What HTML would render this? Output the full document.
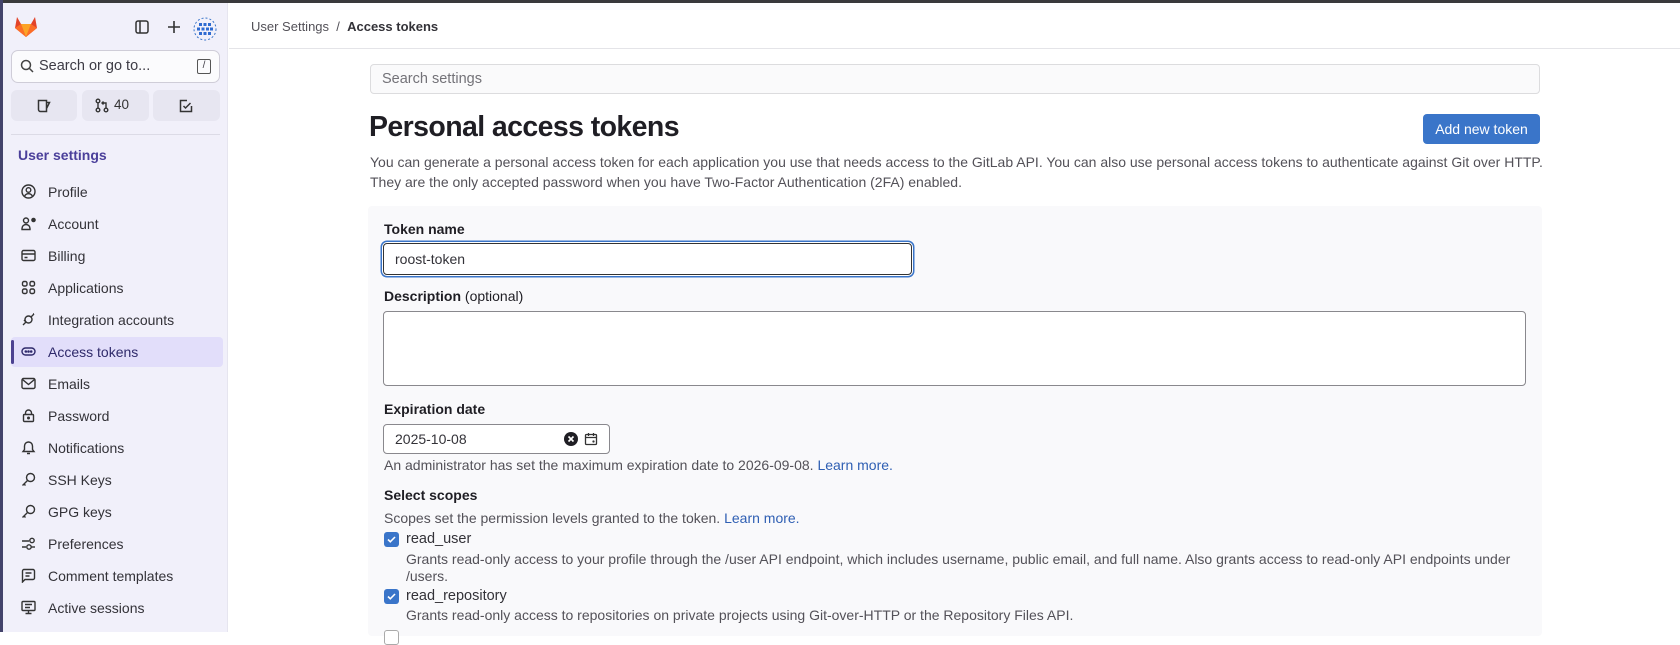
<!DOCTYPE html>
<html><head><meta charset="utf-8"><style>
*{box-sizing:border-box;margin:0;padding:0}
body{width:1680px;height:632px;overflow:hidden;font-family:"Liberation Sans",sans-serif;background:#fff;color:#333238;position:relative}
.topbar{position:absolute;left:0;top:0;width:1680px;height:3px;background:#3a3a3c}
.lstrip{position:absolute;left:0;top:0;width:3px;height:632px;background:#43436b}
.side{position:absolute;left:3px;top:3px;width:225px;height:629px;background:#f1f0fa;border-right:1px solid #e6e5ef}
.sbox{position:absolute;left:8px;top:47px;width:209px;height:33px;border:1px solid #cfcdd8;border-radius:7px;background:#fbfbfd;font-size:14.5px;color:#3d3b45;padding:7px 0 0 27px}
.kbd{position:absolute;right:8px;top:8px;width:14px;height:15px;border:1.3px solid #555;border-radius:2px;font-size:10px;text-align:center;line-height:12px}
.btn3{position:absolute;top:87px;height:31px;background:#e7e6f1;border-radius:6px}
.sep{position:absolute;left:8px;top:131px;width:209px;height:1px;background:#dcdbe6}
.sh{position:absolute;left:15px;top:144px;font-size:14px;font-weight:bold;color:#4a3f9a}
.item{position:absolute;left:8px;width:212px;height:30px;font-size:14px;color:#333238;padding:7px 0 0 37px}
.item svg{position:absolute;left:10px;top:7px}
.item.act{background:#e2defa;border-radius:4px;color:#2f2a6b}
.item.act:before{content:"";position:absolute;left:0;top:3px;width:3px;height:24px;background:#4c4191;border-radius:2px}
.hdr{position:absolute;left:229px;top:3px;right:0;height:46px;border-bottom:1px solid #e4e4e8;font-size:13px;padding:16px 0 0 22px;color:#535158}
.hdr b{color:#333238}
.search{position:absolute;left:370px;top:64px;width:1170px;height:30px;border:1px solid #dcdcde;border-radius:4px;background:#fafafb;font-size:14.5px;color:#737278;padding:6px 11px}
h1{position:absolute;left:369px;top:111px;font-size:28.5px;font-weight:bold;color:#1f1e24;letter-spacing:-0.6px}
.addbtn{position:absolute;left:1423px;top:114px;width:117px;height:30px;background:#3a75c9;border-radius:4px;color:#fff;font-size:14px;text-align:center;line-height:30px}
.desc{position:absolute;left:370px;top:152px;font-size:14px;line-height:20px;color:#535158}
.panel{position:absolute;left:368px;top:206px;width:1174px;height:430px;background:#f9f9fb;border-radius:4px}
.lbl{position:absolute;left:384px;font-size:14px;font-weight:bold;color:#1f1e24}
.lbl span{font-weight:normal}
.inp{position:absolute;background:#fff;border:1px solid #89888d;border-radius:4px;font-size:14px;color:#333238;padding:7px 11px}
.help{position:absolute;left:384px;font-size:14px;color:#535158}
a{color:#2f5fb3;text-decoration:none}
.cb{position:absolute;left:384px;width:15px;height:15px;background:#3a75c9;border-radius:3px}
.cb svg{position:absolute;left:2px;top:2px}
.sc{position:absolute;left:406px;font-size:14.5px;color:#333238}
.sd{position:absolute;left:406px;font-size:14px;color:#535158;line-height:16.5px}
</style></head><body>
<div class="topbar"></div>
<div class="side">
<svg style="position:absolute;left:11px;top:12px" width="24" height="23" viewBox="0 0 24 23"><path d="M12 22 L1 13 L3 2 L7 9 H17 L21 2 L23 13 Z" fill="#e24329"/><path d="M12 22 L1 13 L7 9 Z" fill="#fc6d26"/><path d="M12 22 L23 13 L17 9 Z" fill="#fc6d26"/><path d="M12 22 L7 9 H17 Z" fill="#fca326"/></svg>
<svg style="position:absolute;left:132px;top:17px" width="14" height="14" viewBox="0 0 14 14" fill="none" stroke="#333" stroke-width="1.5"><rect x="1" y="1" width="12" height="12" rx="2"/><path d="M5 1v12"/></svg>
<svg style="position:absolute;left:164px;top:17px" width="14" height="14" viewBox="0 0 14 14" stroke="#333" stroke-width="1.6"><path d="M7 1v12M1 7h12"/></svg>
<svg style="position:absolute;left:190px;top:14px" width="24" height="24" viewBox="0 0 24 24"><circle cx="12" cy="12" r="11" fill="none" stroke="#3a75c9" stroke-width="1" stroke-dasharray="2 2"/><g fill="#2f6bd1"><rect x="6" y="6" width="3" height="3"/><rect x="10.5" y="6" width="3" height="3"/><rect x="15" y="6" width="3" height="3"/><rect x="4" y="10.5" width="3" height="3"/><rect x="8.5" y="10.5" width="3" height="3"/><rect x="13" y="10.5" width="3" height="3"/><rect x="17" y="10.5" width="3" height="3"/><rect x="6" y="15" width="3" height="3"/><rect x="10.5" y="15" width="3" height="3"/><rect x="15" y="15" width="3" height="3"/></g></svg>
<div class="sbox"><svg style="position:absolute;left:8px;top:8px" width="14" height="14" viewBox="0 0 14 14" fill="none" stroke="#444" stroke-width="1.5"><circle cx="6" cy="6" r="4.5"/><path d="M9.5 9.5L13 13"/></svg>Search or go to...<span class="kbd">/</span></div>
<div class="btn3" style="left:8px;width:66px"><svg style="position:absolute;left:26px;top:9px" width="15" height="14" viewBox="0 0 15 14" fill="none" stroke="#333" stroke-width="1.5"><path d="M1.5 1.5h8v11h-6a2 2 0 0 1-2-2z M9.5 3.5h3l-3 6"/></svg></div>
<div class="btn3" style="left:79px;width:67px"><svg style="position:absolute;left:13px;top:8px" width="14" height="15" viewBox="0 0 14 15" fill="none" stroke="#333" stroke-width="1.4"><circle cx="3" cy="3" r="1.8"/><circle cx="3" cy="12" r="1.8"/><circle cx="11" cy="12" r="1.8"/><path d="M3 5v5M11 10V5H7M8.5 3.5L7 5l1.5 1.5"/></svg><span style="position:absolute;left:32px;top:7px;font-size:13.5px;color:#333">40</span></div>
<div class="btn3" style="left:150px;width:67px"><svg style="position:absolute;left:26px;top:9px" width="14" height="14" viewBox="0 0 14 14" fill="none" stroke="#333" stroke-width="1.5"><path d="M12.5 7v5.5h-11v-11H8M4.5 7l2 2 5-5"/></svg></div>
<div class="sep"></div>
<div class="sh">User settings</div>
</div>
<div class="lstrip"></div>
<div style="position:absolute;left:3px;top:3px">
<div class="item" style="top:174px"><svg width="15" height="15" viewBox="0 0 15 15" fill="none" stroke="#333" stroke-width="1.4"><circle cx="7.5" cy="7.5" r="6.5"/><circle cx="7.5" cy="6" r="2.3"/><path d="M3.5 12.3c1-2 2.3-2.6 4-2.6s3 .6 4 2.6"/></svg>Profile</div>
<div class="item" style="top:206px"><svg width="16" height="15" viewBox="0 0 16 15" fill="none" stroke="#333" stroke-width="1.4"><circle cx="5" cy="4.5" r="2.5"/><path d="M1 13.5v-1a4 4 0 0 1 8 0v1z"/><circle cx="12.5" cy="4" r="1.6" fill="#333"/></svg>Account</div>
<div class="item" style="top:238px"><svg width="15" height="15" viewBox="0 0 15 15" fill="none" stroke="#333" stroke-width="1.4"><rect x="1" y="2.5" width="13" height="10" rx="1.5"/><path d="M1 6h13M3.5 9.5h3"/></svg>Billing</div>
<div class="item" style="top:270px"><svg width="15" height="15" viewBox="0 0 15 15" fill="none" stroke="#333" stroke-width="1.4"><rect x="1.5" y="1.5" width="4.5" height="4.5" rx="1.5"/><rect x="9" y="1.5" width="4.5" height="4.5" rx="1.5"/><rect x="1.5" y="9" width="4.5" height="4.5" rx="1.5"/><rect x="9" y="9" width="4.5" height="4.5" rx="1.5"/></svg>Applications</div>
<div class="item" style="top:302px"><svg width="15" height="15" viewBox="0 0 15 15" fill="none" stroke="#333" stroke-width="1.4"><circle cx="7.5" cy="7.5" r="3.5" transform="rotate(-45 7.5 7.5)"/><path d="M2 13l3-3M10 5l3-3M13 2h-1M5 10L3 8"/></svg>Integration accounts</div>
<div class="item act" style="top:334px"><svg width="15" height="15" viewBox="0 0 15 15" fill="none" stroke="#2f2a6b" stroke-width="1.4"><rect x="1" y="4" width="13" height="7" rx="3.5"/><circle cx="4.8" cy="7.5" r=".6" fill="#2f2a6b"/><circle cx="7.5" cy="7.5" r=".6" fill="#2f2a6b"/><circle cx="10.2" cy="7.5" r=".6" fill="#2f2a6b"/></svg>Access tokens</div>
<div class="item" style="top:366px"><svg width="15" height="15" viewBox="0 0 15 15" fill="none" stroke="#333" stroke-width="1.4"><rect x="1" y="2.5" width="13" height="10" rx="1.5"/><path d="M1.5 3.5l6 5 6-5"/></svg>Emails</div>
<div class="item" style="top:398px"><svg width="15" height="15" viewBox="0 0 15 15" fill="none" stroke="#333" stroke-width="1.4"><rect x="2.5" y="6.5" width="10" height="7" rx="1"/><path d="M4.5 6.5V5a3 3 0 0 1 6 0v1.5"/><circle cx="7.5" cy="10" r=".8" fill="#333"/></svg>Password</div>
<div class="item" style="top:430px"><svg width="15" height="15" viewBox="0 0 15 15" fill="none" stroke="#333" stroke-width="1.4"><path d="M2 11.5h11l-1.5-2V6a4 4 0 0 0-8 0v3.5z M6 13.5h3"/></svg>Notifications</div>
<div class="item" style="top:462px"><svg width="15" height="15" viewBox="0 0 15 15" fill="none" stroke="#333" stroke-width="1.4"><circle cx="9.5" cy="5.5" r="4"/><path d="M6.5 8.5l-5 5M3 12l1.5 1.5"/></svg>SSH Keys</div>
<div class="item" style="top:494px"><svg width="15" height="15" viewBox="0 0 15 15" fill="none" stroke="#333" stroke-width="1.4"><circle cx="9.5" cy="5.5" r="4"/><path d="M6.5 8.5l-5 5M3 12l1.5 1.5"/></svg>GPG keys</div>
<div class="item" style="top:526px"><svg width="15" height="15" viewBox="0 0 15 15" fill="none" stroke="#333" stroke-width="1.4"><path d="M1 5h7M1 11h4"/><circle cx="11" cy="4.5" r="2.2"/><circle cx="8" cy="11" r="2.2"/><path d="M10.5 11H14"/></svg>Preferences</div>
<div class="item" style="top:558px"><svg width="15" height="15" viewBox="0 0 15 15" fill="none" stroke="#333" stroke-width="1.4"><path d="M1.5 14V3a1.5 1.5 0 0 1 1.5-1.5h9A1.5 1.5 0 0 1 13.5 3v7a1.5 1.5 0 0 1-1.5 1.5H4z M4.5 5h6M4.5 8h4"/></svg>Comment templates</div>
<div class="item" style="top:590px"><svg width="15" height="15" viewBox="0 0 15 15" fill="none" stroke="#333" stroke-width="1.4"><rect x="1" y="1.5" width="13" height="9" rx="1"/><path d="M7.5 10.5v3M4.5 13.5h6M4 4.5h7M4 7.5h5"/></svg>Active sessions</div>
</div>
<div class="hdr">User Settings &nbsp;/&nbsp; <b>Access tokens</b></div>
<div class="search">Search settings</div>
<h1>Personal access tokens</h1>
<div class="addbtn">Add new token</div>
<div class="desc">You can generate a personal access token for each application you use that needs access to the GitLab API. You can also use personal access tokens to authenticate against Git over HTTP.<br>They are the only accepted password when you have Two-Factor Authentication (2FA) enabled.</div>
<div class="panel"></div>
<div class="lbl" style="top:221px">Token name</div>
<div class="inp" style="left:383px;top:243px;width:529px;height:32px;border-color:#333;box-shadow:0 0 0 1px #fff,0 0 0 2.5px #3a75c9;padding-top:7px">roost-token</div>
<div class="lbl" style="top:288px">Description <span>(optional)</span></div>
<div class="inp" style="left:383px;top:311px;width:1143px;height:75px"></div>
<div class="lbl" style="top:401px">Expiration date</div>
<div class="inp" style="left:383px;top:424px;width:227px;height:30px;padding-top:6px">2025-10-08
<svg style="position:absolute;left:180px;top:7px" width="14" height="14" viewBox="0 0 14 14"><circle cx="7" cy="7" r="7" fill="#1f1e24"/><path d="M4.5 4.5l5 5M9.5 4.5l-5 5" stroke="#fff" stroke-width="1.6"/></svg>
<svg style="position:absolute;left:200px;top:7px" width="14" height="14" viewBox="0 0 14 14" fill="none" stroke="#333" stroke-width="1.3"><rect x="1.5" y="2.5" width="11" height="10" rx="1"/><path d="M1.5 5.5h11M4.5 1v3M9.5 1v3"/><circle cx="9.5" cy="9.5" r=".5" fill="#333"/></svg></div>
<div class="help" style="top:457px">An administrator has set the maximum expiration date to 2026-09-08. <a>Learn more.</a></div>
<div class="lbl" style="top:487px">Select scopes</div>
<div class="help" style="top:510px">Scopes set the permission levels granted to the token. <a>Learn more.</a></div>
<div class="cb" style="top:532px"><svg width="11" height="11" viewBox="0 0 11 11" fill="none" stroke="#fff" stroke-width="1.6"><path d="M2 5.5l2.3 2.3L9 3"/></svg></div>
<div class="sc" style="top:531px">read_user</div>
<div class="sd" style="top:551px">Grants read-only access to your profile through the /user API endpoint, which includes username, public email, and full name. Also grants access to read-only API endpoints under<br>/users.</div>
<div class="cb" style="top:589px"><svg width="11" height="11" viewBox="0 0 11 11" fill="none" stroke="#fff" stroke-width="1.6"><path d="M2 5.5l2.3 2.3L9 3"/></svg></div>
<div class="sc" style="top:588px">read_repository</div>
<div class="sd" style="top:607px">Grants read-only access to repositories on private projects using Git-over-HTTP or the Repository Files API.</div>
<div class="cb" style="top:630px;background:#fff;border:1px solid #aaa"></div>
</body></html>
